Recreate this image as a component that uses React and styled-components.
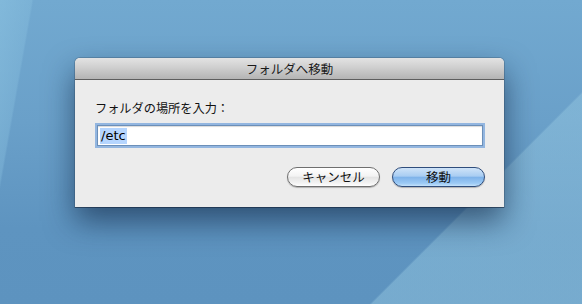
import React from "react";
import styled, { createGlobalStyle } from "styled-components";

const Global = createGlobalStyle`
  html, body { margin: 0; padding: 0; }
  body {
    width: 582px;
    height: 304px;
    overflow: hidden;
    font-family: "DejaVu Sans", "Noto Sans CJK JP", sans-serif;
  }
`;

const Desktop = styled.div`
  width: 582px;
  height: 304px;
  box-sizing: border-box;
  padding: 58px 0 0 75px;
  background:
    linear-gradient(135deg, rgba(255,255,255,0) 0%, rgba(255,255,255,0) 76%, rgba(150,200,225,0.45) 76.3%, rgba(150,200,225,0.45) 100%),
    linear-gradient(100deg, rgba(140,195,225,0.6) 0%, rgba(140,195,225,0.35) 5%, rgba(0,0,0,0) 5.3%),
    linear-gradient(180deg, #72a9d0 0%, #6aa0c9 40%, #5e94c0 75%, #5d93bf 100%);
`;

const Window = styled.div`
  width: 429px;
  background: #ececec;
  border-radius: 5px 5px 0 0;
  box-shadow: 0 14px 30px rgba(10, 30, 60, 0.6), 0 1px 0 rgba(40, 60, 80, 0.6), 0 0 0 1px rgba(60, 80, 100, 0.3);
  display: flex;
  flex-direction: column;
`;

const TitleBar = styled.div`
  height: 21px;
  border-radius: 5px 5px 0 0;
  background: linear-gradient(180deg, #e3e3e3 0%, #cfcfcf 45%, #b4b4b4 100%);
  border-bottom: 1px solid #5e5e5e;
  display: flex;
  align-items: center;
  justify-content: center;
  font-family: "Noto Sans CJK JP", sans-serif;
  font-size: 12.5px;
  color: #1a1a1a;
`;

const Body = styled.div`
  padding: 20px 19px 20px 20px;
  display: flex;
  flex-direction: column;
`;

const Label = styled.div`
  font-family: "Noto Sans CJK JP", sans-serif;
  font-size: 12.2px;
  line-height: 16px;
  color: #111;
  height: 16px;
  margin-bottom: 9px;
`;

const Field = styled.div`
  height: 19px;
  margin: 0 2px;
  background: #fff;
  border: 1px solid #6c8fb8;
  box-shadow: 0 0 0 2px #93b6e0, inset 0 1px 1px rgba(0,0,0,0.15);
  display: flex;
  align-items: center;
  padding-left: 2px;
`;

const Selected = styled.span`
  background: #b5d5fe;
  font-family: "DejaVu Sans", sans-serif;
  font-size: 13px;
  line-height: 16px;
  color: #000;
  padding: 0 1px;
`;

const Buttons = styled.div`
  display: flex;
  justify-content: flex-end;
  gap: 12px;
  margin-top: 21px;
`;

const Button = styled.button`
  width: 93px;
  height: 20px;
  border-radius: 10px;
  font-family: "Noto Sans CJK JP", sans-serif;
  font-size: 12.5px;
  line-height: 1;
  color: #111;
  padding: 0;
  display: flex;
  align-items: center;
  justify-content: center;
  border: 1px solid ${(p) => (p.$primary ? "#2f4d7c" : "#6f6f6f")};
  background: ${(p) =>
    p.$primary
      ? "linear-gradient(180deg, #cfe3f8 0%, #a9cdf2 45%, #7fb3ea 52%, #9ccaf5 85%, #c4e2fb 100%)"
      : "linear-gradient(180deg, #ffffff 0%, #f3f3f3 45%, #e4e4e4 52%, #f4f4f4 85%, #ffffff 100%)"};
  box-shadow: 0 1px 1px rgba(0,0,0,0.25);
`;

export default function App() {
  return (
    <>
      <Global />
      <Desktop>
        <Window>
          <TitleBar>フォルダへ移動</TitleBar>
          <Body>
            <Label>フォルダの場所を入力：</Label>
            <Field>
              <Selected>/etc</Selected>
            </Field>
            <Buttons>
              <Button>キャンセル</Button>
              <Button $primary>移動</Button>
            </Buttons>
          </Body>
        </Window>
      </Desktop>
    </>
  );
}
